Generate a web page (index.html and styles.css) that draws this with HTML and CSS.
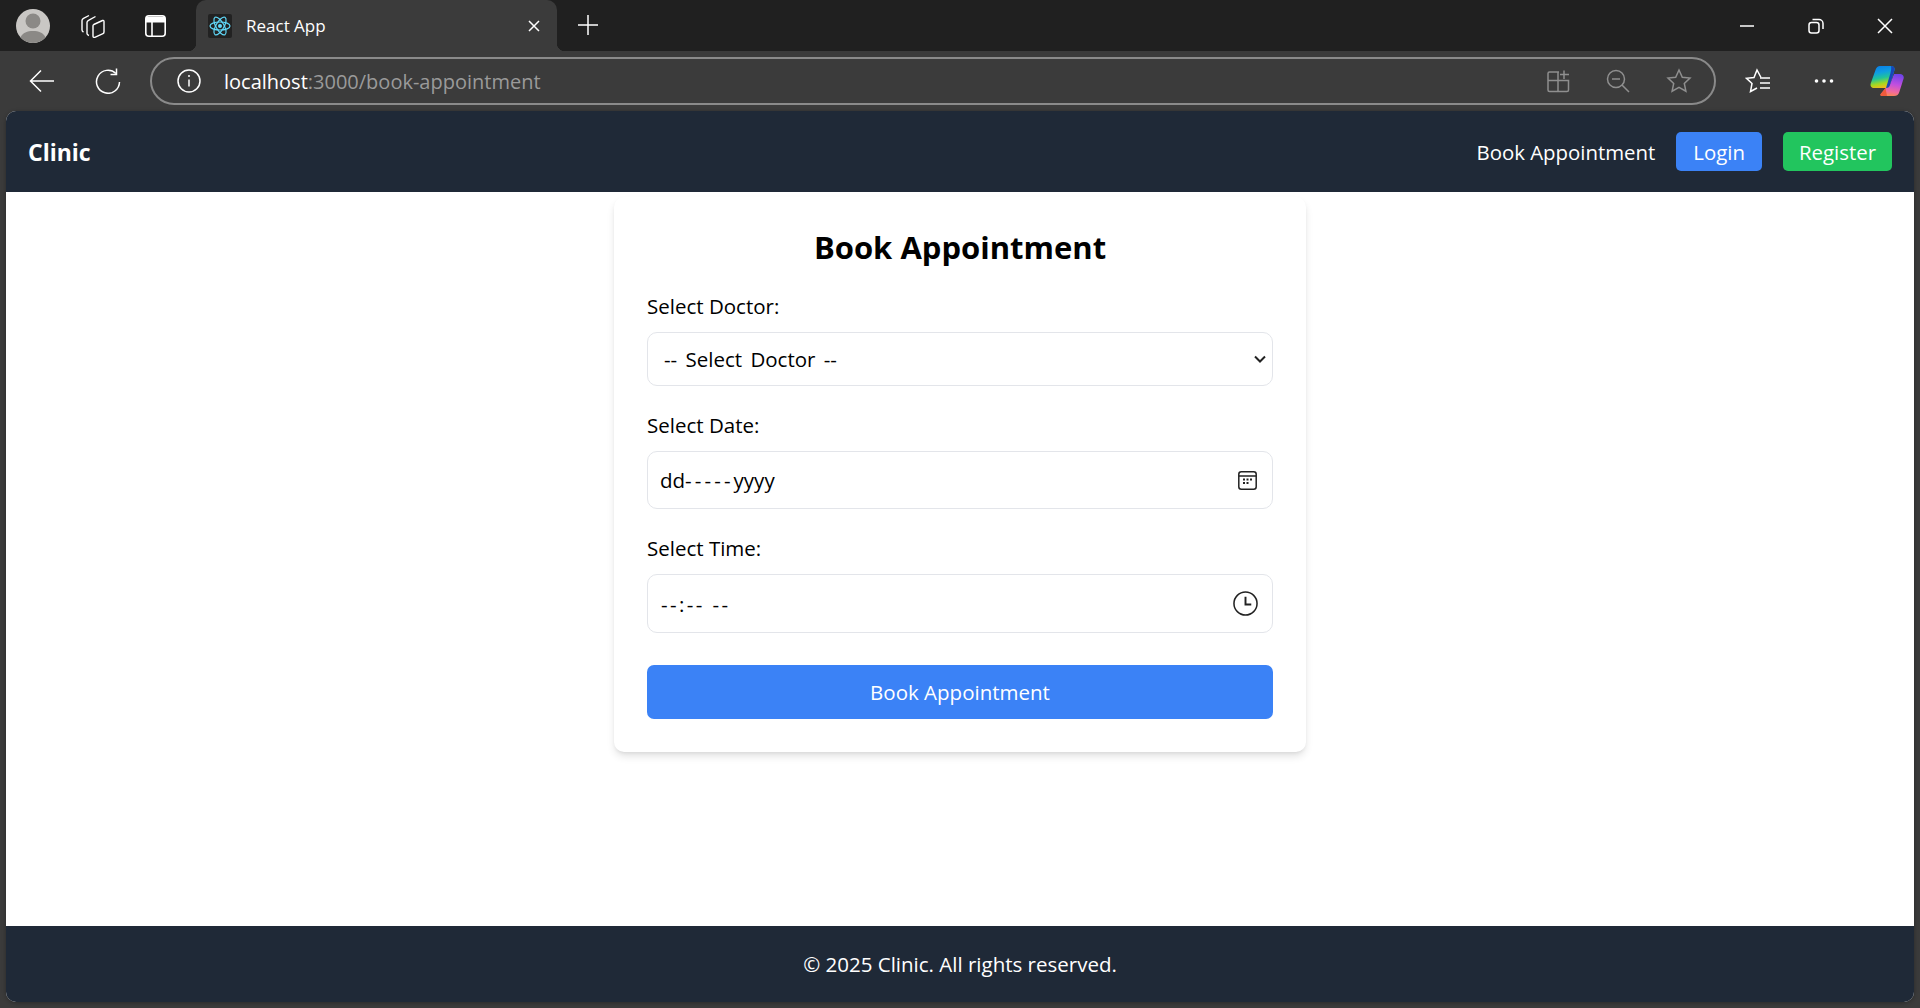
FILE: index.html
```html
<!DOCTYPE html>
<html lang="en">
<head>
  <meta charset="UTF-8">
  <title>React App</title>
  <meta name="viewport" content="width=device-width, initial-scale=1.0">
  <link rel="stylesheet" href="styles.css">
</head>
<body>

  <div class="tabstrip">
    <div class="strip-left">
      <svg class="avatar" width="34" height="34" viewBox="0 0 34 34">
        <circle cx="17" cy="17" r="17" fill="#c9c7c4"/>
        <circle cx="17" cy="12" r="7.500" fill="#8b8986"/>
        <path d="M4.500 28.500c2-5 7-6.500 12.500-6.500s10.500 1.500 12.500 6.500A17 17 0 0 1 4.500 28.500z" fill="#8b8986"/>
      </svg>
      <svg class="strip-collections" width="24" height="24" viewBox="0 0 24 24" fill="none" stroke="#fff" stroke-width="1.400" stroke-linejoin="round">
        <path d="M2.500 18C1.500 17.500 1 16.800 1 16V6.500C1 5.500 1.500 4.800 2.500 4.300L8 1.500"/>
        <path d="M8 21.500C6.500 21 6 20.300 6 19.500V8.500C6 7.500 6.500 6.800 7.500 6.300L14.500 2.500"/>
        <path d="M12.800 10.500L21.500 6.500C22.500 6.100 23 6.500 23 7.500V18C23 18.800 22.700 19.300 22 19.600L13.800 23.300C12.800 23.700 12 23.200 12 22.200V11.800C12 11.200 12.300 10.800 12.800 10.500z"/>
      </svg>
      <svg class="strip-workspace" width="21" height="22" viewBox="0 0 21 22" fill="none" stroke="#fff" stroke-width="1.600">
        <rect x="0.800" y="0.800" width="19.400" height="20.400" rx="3"/>
        <path d="M1 4.500h19" stroke-width="6"/>
        <path d="M7 6v15"/>
      </svg>
    </div>
    <div class="tab">
      <svg class="favicon" width="24" height="24" viewBox="0 0 24 24" fill="none" stroke="#61dafb" stroke-width="1.200">
        <rect width="24" height="24" rx="2" fill="#222" stroke="none"/>
        <ellipse cx="12" cy="12" rx="10" ry="4"/>
        <ellipse cx="12" cy="12" rx="10" ry="4" transform="rotate(60 12 12)"/>
        <ellipse cx="12" cy="12" rx="10" ry="4" transform="rotate(120 12 12)"/>
        <circle cx="12" cy="12" r="2" fill="#61dafb" stroke="none"/>
      </svg>
      <span class="tab-title">React App</span>
      <svg class="tab-close" width="14" height="14" viewBox="0 0 14 14" stroke="#fff" stroke-width="1.500">
        <path d="M2 2l10 10M12 2L2 12"/>
      </svg>
    </div>
    <svg class="new-tab" width="22" height="22" viewBox="0 0 22 22" stroke="#fff" stroke-width="1.500">
      <path d="M11 1v20M1 11h20"/>
    </svg>
    <div class="window-btns">
      <svg width="16" height="16" viewBox="0 0 16 16" stroke="#fff" stroke-width="1.500"><path d="M1 8h14"/></svg>
      <svg width="16" height="16" viewBox="0 0 16 16" fill="none" stroke="#fff" stroke-width="1.500">
        <rect x="1" y="4.500" width="10" height="10.500" rx="2.500"/>
        <path d="M4.500 1.500h6.500a4 4 0 0 1 4 4V11"/>
      </svg>
      <svg width="16" height="16" viewBox="0 0 16 16" stroke="#fff" stroke-width="1.500"><path d="M1 1l14 14M15 1L1 15"/></svg>
    </div>
  </div>

  <div class="toolbar">
    <svg class="tool-back" width="26" height="26" viewBox="0 0 26 26" fill="none" stroke="#fff" stroke-width="1.500">
      <path d="M25 13H1.500M12 2.500L1.500 13 12 23.500"/>
    </svg>
    <svg class="tool-reload" width="26" height="26" viewBox="0 0 26 26" fill="none" stroke="#fff" stroke-width="1.500">
      <path d="M21 5.500A11.500 11.500 0 1 0 24.500 14"/>
      <path d="M21.500 0.500V6.500H15.500"/>
    </svg>
    <div class="addressbar">
      <svg class="info" width="24" height="24" viewBox="0 0 24 24" fill="none" stroke="#fff" stroke-width="1.500">
        <circle cx="12" cy="12" r="11"/>
        <path d="M12 10.500v7"/>
        <circle cx="12" cy="7" r="1" fill="#fff" stroke="none"/>
      </svg>
      <span class="url"><b>localhost</b>:3000/book-appointment</span>
      <div class="address-icons">
        <svg width="24" height="24" viewBox="0 0 24 24" fill="none" stroke="#8f8f8f" stroke-width="1.500">
          <path d="M13 3H3.500A1.500 1.500 0 0 0 2 4.500V21a1.500 1.500 0 0 0 1.500 1.500H21a1.500 1.500 0 0 0 1.500-1.500V11.500H2M12 3V22.500"/>
          <path d="M18 1.500V10M14 5.500H23"/>
        </svg>
        <svg width="24" height="24" viewBox="0 0 24 24" fill="none" stroke="#8f8f8f" stroke-width="1.500">
          <circle cx="10" cy="10" r="8.500"/>
          <path d="M6 10h8M16 16l7 7"/>
        </svg>
        <svg width="26" height="26" viewBox="0 0 26 26" fill="none" stroke="#8f8f8f" stroke-width="1.500">
          <path d="M13 2l3.300 7.200 7.700.9-5.700 5.300 1.600 7.800L13 19.300 6.100 23.200l1.600-7.800L2 10.100l7.700-.9z"/>
        </svg>
      </div>
    </div>
    <div class="tool-right">
      <svg width="26" height="26" viewBox="0 0 26 26" fill="none" stroke="#fff" stroke-width="1.500">
        <path d="M16 9.500L12 2 9 9.500l-7.500.8 5.500 5.200-1.500 8L12 20"/>
        <path d="M15 10h10M15 15h10M15 20h10"/>
      </svg>
      <svg class="tool-dots" width="20" height="6" viewBox="0 0 20 6" fill="#fff">
        <circle cx="2.500" cy="3" r="1.800"/><circle cx="10" cy="3" r="1.800"/><circle cx="17.500" cy="3" r="1.800"/>
      </svg>
      <svg class="tool-copilot" width="34" height="30" viewBox="0 0 34 30">
        <defs>
          <linearGradient id="copilotA" x1="0.300" y1="0" x2="0.500" y2="1">
            <stop offset="0" stop-color="#0a7fe8"/>
            <stop offset="0.300" stop-color="#0f9fe0"/>
            <stop offset="0.550" stop-color="#20c49a"/>
            <stop offset="0.800" stop-color="#a6d820"/>
            <stop offset="1" stop-color="#f7b51c"/>
          </linearGradient>
          <linearGradient id="copilotB" x1="0.600" y1="0" x2="0.400" y2="1">
            <stop offset="0" stop-color="#7044ea"/>
            <stop offset="0.450" stop-color="#c04fe0"/>
            <stop offset="0.800" stop-color="#f26a9c"/>
            <stop offset="1" stop-color="#f98850"/>
          </linearGradient>
        </defs>
        <path d="M10 0h11c2.500 0 4 1.500 3.500 4L20 19c-.5 2-2 3-4 3H4C1.500 22 0 20 .7 17.500L5.500 4C6.300 1.500 8 0 10 0z" fill="url(#copilotA)"/>
        <path d="M24 8h6c2.500 0 4.300 2 3.600 4.500L29.500 25.500C28.700 28.500 27 30 24 30H12c-1.500 0-2-1-1.300-2l5-6c2 0 3.500-1 4-3z" fill="url(#copilotB)"/>
        <path d="M21 0c2.500 0 4 1.500 3.500 4L20 19c-.5 2-2 3-4 3l4.500-15c.5-2.500 1-5.500.5-7z" fill="#1746b8"/>
        <path d="M10.700 28c-.7 1 0 2 1.300 2h5l-1.500-8z" fill="#ef5a3c"/>
      </svg>
    </div>
  </div>

  <div class="page">
    <nav class="navbar">
      <a class="brand">Clinic</a>
      <div class="nav-links">
        <a class="nav-link">Book Appointment</a>
        <a class="nav-btn login">Login</a>
        <a class="nav-btn register">Register</a>
      </div>
    </nav>

    <main class="content">
      <form class="card">
        <h2 class="card-title">Book Appointment</h2>

        <label class="field-label">Select Doctor:</label>
        <div class="select-wrap">
          <select class="field-select">
            <option>-- Select Doctor --</option>
          </select>
          <svg class="select-arrow" width="12" height="8" viewBox="0 0 12 8" fill="none" stroke="#222" stroke-width="2">
            <path d="M1 1.500l5 5 5-5"/>
          </svg>
        </div>

        <label class="field-label label-date">Select Date:</label>
        <div class="field-input date-input">
          <span>dd<span class="date-dashes">-----</span>yyyy</span>
          <svg width="19" height="19" viewBox="0 0 19 19" fill="none" stroke="#222" stroke-width="1.500">
            <rect x="0.800" y="0.800" width="17.400" height="17.400" rx="2.500"/>
            <path d="M1 5h17"/>
            <path d="M5 8.500h2M8.500 8.500h2M12 8.500h2M5 12h2M8.500 12h2" stroke-width="2"/>
          </svg>
        </div>

        <label class="field-label label-time">Select Time:</label>
        <div class="field-input time-input">
          <span class="time-text">--:-- --</span>
          <svg width="25" height="25" viewBox="0 0 26 26" fill="none" stroke="#222" stroke-width="1.600">
            <circle cx="13" cy="13" r="12"/>
            <path d="M13 6v8h6" stroke-width="2"/>
          </svg>
        </div>

        <button class="submit-btn" type="button">Book Appointment</button>
      </form>
    </main>

    <footer class="footer">© 2025 Clinic. All rights reserved.</footer>
  </div>

</body>
</html>
```

FILE: styles.css
```css
* {
  box-sizing: border-box;
}

html, body {
  height: 100%;
}

body {
  margin: 0;
  display: flex;
  flex-direction: column;
  background: #3b3b3b;
  font-family: "Open Sans", "Liberation Sans", sans-serif;
  color: #000;
  overflow: hidden;
}

svg {
  display: block;
  flex: none;
}

/* browser chrome */
.tabstrip {
  height: 51px;
  display: flex;
  align-items: center;
  background: #202020;
}

.strip-left {
  width: 196px;
  display: flex;
  align-items: center;
  padding-left: 16px;
}

.strip-collections {
  margin-left: 31px;
}

.strip-workspace {
  margin-left: 40px;
}

.tab {
  position: relative;
  width: 361px;
  height: 51px;
  display: flex;
  align-items: center;
  padding: 0 16px 0 12px;
  background: #3b3b3b;
  border-radius: 10px 10px 0 0;
  color: #fff;
}

.tab::before,
.tab::after {
  content: "";
  position: absolute;
  bottom: 0;
  width: 8px;
  height: 8px;
}

.tab::before {
  left: -8px;
  background: radial-gradient(circle at 0 0, transparent 8px, #3b3b3b 8.500px);
}

.tab::after {
  right: -8px;
  background: radial-gradient(circle at 100% 0, transparent 8px, #3b3b3b 8.500px);
}

.tab-title {
  flex: 1;
  margin-left: 14px;
  font-size: 17px;
}

.new-tab {
  margin: 0 0 1px 20px;
}

.window-btns {
  margin-left: auto;
  padding-right: 27px;
  display: flex;
  gap: 53px;
}

.toolbar {
  height: 60px;
  display: flex;
  align-items: center;
  background: #3b3b3b;
}

.tool-back {
  margin-left: 29px;
}

.tool-reload {
  margin-left: 40px;
}

.addressbar {
  width: 1566px;
  height: 48px;
  margin-left: 29px;
  display: flex;
  align-items: center;
  padding: 0 22px 0 25px;
  border: 2px solid #8a8a8a;
  border-radius: 24px;
}

.url {
  margin-left: 23px;
  font-size: 20px;
  color: #9a9a9a;
}

.url b {
  font-weight: 400;
  color: #fff;
}

.address-icons {
  margin-left: auto;
  display: flex;
  align-items: center;
  gap: 36px;
}

.tool-right {
  flex: 1;
  display: flex;
  align-items: center;
  padding-left: 29px;
}

.tool-dots {
  margin-left: 43px;
}

.tool-copilot {
  margin-left: 36px;
}

/* page */
.page {
  flex: 1;
  margin: 0 6px 6px;
  display: flex;
  flex-direction: column;
  border-radius: 10px;
  overflow: hidden;
  background: #fff;
  box-shadow: 0 1px 4px rgba(0,0,0,0.3);
}

.navbar {
  height: 81px;
  display: flex;
  align-items: center;
  justify-content: space-between;
  padding: 0 22px;
  background: #1f2937;
  color: #fff;
}

.brand {
  font-size: 23px;
  font-weight: 700;
}

.nav-links {
  display: flex;
  align-items: center;
  gap: 21px;
  font-size: 20.400px;
}

.nav-btn {
  height: 39px;
  display: flex;
  align-items: center;
  border-radius: 5px;
}

.login {
  padding: 0 17px;
  background: #3b82f6;
}

.register {
  padding: 0 16px;
  background: #22c55e;
}

.content {
  flex: 1;
  display: flex;
  justify-content: center;
  align-items: flex-start;
  padding-top: 5px;
}

.card {
  width: 692px;
  height: 555px;
  display: flex;
  flex-direction: column;
  padding: 27px 33px 33px;
  background: #fff;
  border-radius: 10px;
  box-shadow: 0 5px 8px -1px rgba(0,0,0,0.12), 0 2px 4px -2px rgba(0,0,0,0.1);
}

.card-title {
  margin: 0;
  height: 46px;
  line-height: 46px;
  font-size: 31px;
  font-weight: 700;
  text-align: center;
}

.field-label {
  height: 28px;
  line-height: 28px;
  margin-top: 22px;
  font-size: 20.500px;
}

.label-date {
  margin-top: 25px;
}

.label-time {
  margin-top: 26px;
}

.select-wrap {
  position: relative;
  margin-top: 12px;
}

.select-arrow {
  position: absolute;
  top: 23px;
  right: 7px;
  pointer-events: none;
}

.field-select,
.field-input {
  display: block;
  width: 100%;
  border: 1px solid #e3e5ea;
  border-radius: 10px;
  background: #fff;
  color: #000;
  font-family: inherit;
  font-size: 20.500px;
}

.field-select {
  height: 54px;
  padding: 0 16px;
  appearance: none;
  word-spacing: 3px;
}

.field-input {
  margin-top: 12px;
  display: flex;
  align-items: center;
  justify-content: space-between;
}

.date-input {
  height: 58px;
  padding: 0 15px 0 12px;
}

.date-dashes {
  letter-spacing: 3.100px;
}

.time-input {
  height: 59px;
  padding: 0 14px 0 13px;
}

.label-time {
  margin-top: 25px;
}

.time-text {
  letter-spacing: 2.400px;
}

.submit-btn {
  height: 54px;
  margin-top: 32px;
  border: none;
  border-radius: 7px;
  background: #3b82f6;
  color: #fff;
  font-family: inherit;
  font-size: 20.500px;
}

.footer {
  height: 76px;
  display: flex;
  align-items: center;
  justify-content: center;
  background: #1f2937;
  color: #fff;
  font-size: 20.500px;
}
```
